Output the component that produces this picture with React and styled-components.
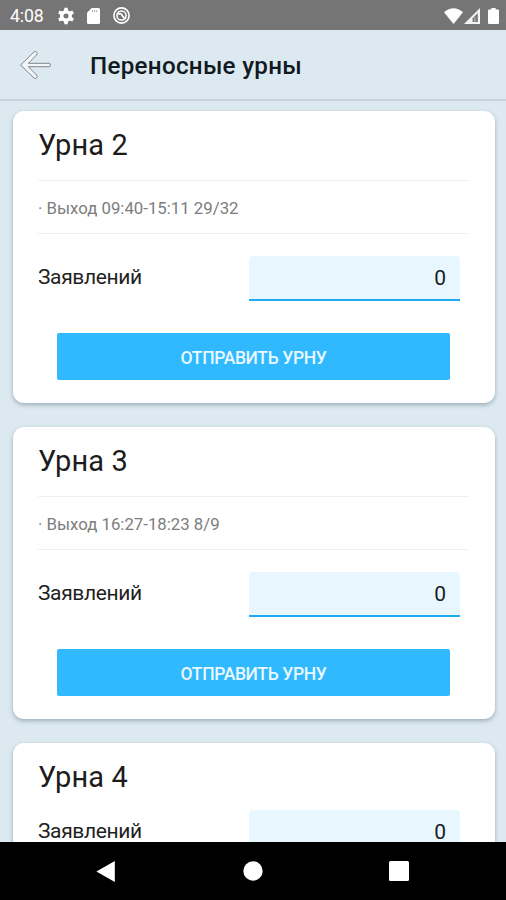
import React from "react";
import styled, { createGlobalStyle } from "styled-components";

const GlobalStyle = createGlobalStyle`
  * { box-sizing: border-box; }
  body { margin: 0; background: #dce9f1; font-family: Roboto, sans-serif; }
`;

const Screen = styled.div`
  display: flex;
  flex-direction: column;
  width: 506px;
  height: 900px;
  overflow: hidden;
  background: #dce9f1;
`;

const StatusBar = styled.header`
  display: flex;
  align-items: center;
  justify-content: space-between;
  flex: none;
  height: 30px;
  padding: 1px 7px 0 10px;
  background: #757575;
  color: #fff;
`;

const Clock = styled.span`
  width: 47px;
  font-size: 17.7px;
  line-height: 28px;
  letter-spacing: -0.1px;
`;

const StatusGroup = styled.div`
  display: flex;
  align-items: center;
`;

const AppBar = styled.div`
  display: flex;
  align-items: center;
  flex: none;
  height: 71px;
  padding: 0 20px;
  gap: 39px;
  border-bottom: 2px solid #c8d4dd;
`;

const AppTitle = styled.h1`
  margin: 2px 0 0;
  font-size: 24.2px;
  font-weight: 500;
  line-height: 32px;
  letter-spacing: 0.28px;
  color: #111a20;
`;

const CardList = styled.main`
  display: flex;
  flex-direction: column;
  gap: 24px;
  flex: 1;
  min-height: 0;
  padding: 10px 11.5px 0 12.5px;
  overflow-y: auto;
  scrollbar-width: none;
`;

const Card = styled.section`
  flex: none;
  height: 292px;
  padding: 0 25.5px;
  border-radius: 11px;
  background: #fff;
  box-shadow: 0 2px 4px rgba(50, 70, 80, 0.36);
`;

const CardTitle = styled.h2`
  margin: 0;
  padding-top: 14px;
  height: 67px;
  font-size: 29px;
  font-weight: 400;
  line-height: 40px;
  letter-spacing: 0.15px;
  color: #1c1c1c;
`;

const TripRow = styled.div`
  height: 54px;
  margin: 2px 0 22px;
  border: solid #efefef;
  border-width: 1px 0;
  font-size: 16.8px;
  line-height: 54px;
  color: #7d7d7d;
`;

const Field = styled.label`
  display: flex;
  justify-content: space-between;
  padding-right: 9px;
`;

const FieldName = styled.span`
  font-size: 21px;
  line-height: 42px;
  letter-spacing: -0.38px;
  color: #1f1f1f;
`;

const FieldInput = styled.input`
  width: 211px;
  height: 45px;
  padding: 1px 14px 0;
  border: 0;
  border-bottom: 2px solid #1eaaf0;
  border-radius: 4px 4px 0 0;
  outline: 0;
  background: #e8f7ff;
  font: 21px Roboto, sans-serif;
  text-align: right;
  color: #1c1c1c;
`;

const SubmitButton = styled.button`
  display: block;
  width: 393px;
  height: 47px;
  margin: 32px 0 0 19px;
  padding: 2px 0 0;
  border: 0;
  border-radius: 2px;
  background: #30b9ff;
  font: 500 17.5px Roboto, sans-serif;
  letter-spacing: -0.38px;
  color: #e9f8ff;
`;

const NavBar = styled.nav`
  display: flex;
  align-items: center;
  justify-content: space-between;
  flex: none;
  height: 58px;
  padding: 0 97px 0 96px;
  background: #000;
`;

const Glyph = styled.svg`
  display: block;
  flex: none;
  overflow: visible;
  margin-left: ${(p) => p.$gap || 0}px;
`;

const urns = [
  { id: 2, trip: "09:40-15:11 29/32" },
  { id: 3, trip: "16:27-18:23 8/9" },
  { id: 4 },
];

const gearTeeth = [0, 60, 120, 180, 240, 300];

function UrnCard({ urn }) {
  return (
    <Card>
      <CardTitle>Урна {urn.id}</CardTitle>
      {urn.trip && <TripRow>· Выход {urn.trip}</TripRow>}
      <Field>
        <FieldName>Заявлений</FieldName>
        <FieldInput defaultValue="0" />
      </Field>
      <SubmitButton>ОТПРАВИТЬ УРНУ</SubmitButton>
    </Card>
  );
}

export default function App() {
  return (
    <Screen>
      <GlobalStyle />
      <StatusBar>
        <StatusGroup>
          <Clock>4:08</Clock>
          <Glyph width="18" height="18" viewBox="-9 -9 18 18" fill="#fff">
            <circle r="4.3" fill="none" stroke="#fff" strokeWidth="3.4" />
            {gearTeeth.map((angle) => (
              <path key={angle} d="M-2.1-5 -1.6-8.2H1.6L2.1-5z" transform={`rotate(${angle})`} />
            ))}
          </Glyph>
          <Glyph $gap={12} width="13" height="16" viewBox="0 0 13 16">
            <path d="M4.7 0H11.5A1.5 1.5 0 0 1 13 1.5V14.5A1.5 1.5 0 0 1 11.5 16H1.5A1.5 1.5 0 0 1 0 14.5V4.8z" fill="#fff" />
            <path d="M5.4 2v2.2M7.6 2v2.2M9.8 2v2.2" stroke="#aaa" strokeWidth="1" />
          </Glyph>
          <Glyph $gap={13} width="17" height="17" viewBox="0 0 17 17" fill="none" stroke="#fff">
            <circle cx="8.5" cy="8.5" r="7.6" strokeWidth="1.6" />
            <circle cx="8.5" cy="8.5" r="4.6" strokeWidth="1.5" />
            <path d="M4.8 7.2Q8.2 5.6 9.3 8.7L12.4 12.2" strokeWidth="1.7" />
          </Glyph>
        </StatusGroup>
        <StatusGroup>
          <Glyph width="19" height="16" viewBox="0 0 19 16">
            <path d="M0 4.2Q9.5-3.6 19 4.2L9.5 16z" fill="#fff" />
          </Glyph>
          <Glyph $gap={1} width="16" height="16" viewBox="0 0 16 16">
            <path d="M16 0V16H0z" fill="#f4f4f4" />
            <path d="M13.8 5V14H8.6V10.2z" fill="#777" />
            <path d="M10.9 9V14" stroke="#bbb" strokeWidth="1" />
          </Glyph>
          <Glyph $gap={8} width="11" height="16" viewBox="0 0 11 16">
            <path d="M3.3 0H7.7V1.6H10Q11 1.6 11 2.6V15Q11 16 10 16H1Q0 16 0 15V2.6Q0 1.6 1 1.6H3.3z" fill="#fff" />
          </Glyph>
        </StatusGroup>
      </StatusBar>
      <AppBar>
        <Glyph width="31" height="28" viewBox="0 0 31 28" fill="#f2f6f9" stroke="#7d858b" strokeWidth="1" strokeLinejoin="round">
          <path d="M.7 14 14 .9Q15.5-.1 16.7 1.2 17.8 2.6 16.5 4L8.3 12.3H29.2Q30.4 12.3 30.4 14T29.2 15.7H8.3L16.5 24Q17.8 25.4 16.7 26.8 15.5 28.1 14 27.1z" />
        </Glyph>
        <AppTitle>Переносные урны</AppTitle>
      </AppBar>
      <CardList>
        {urns.map((urn) => (
          <UrnCard key={urn.id} urn={urn} />
        ))}
      </CardList>
      <NavBar>
        <Glyph width="19" height="21" viewBox="0 0 19 21">
          <path d="M18.8 0V21L.4 10.5z" fill="#fff" />
        </Glyph>
        <Glyph width="20" height="20" viewBox="0 0 20 20">
          <circle cx="11" cy="10" r="9.7" fill="#fff" />
        </Glyph>
        <Glyph width="20" height="20" viewBox="0 0 20 20">
          <rect width="20" height="20" rx="1.5" fill="#fff" />
        </Glyph>
      </NavBar>
    </Screen>
  );
}
